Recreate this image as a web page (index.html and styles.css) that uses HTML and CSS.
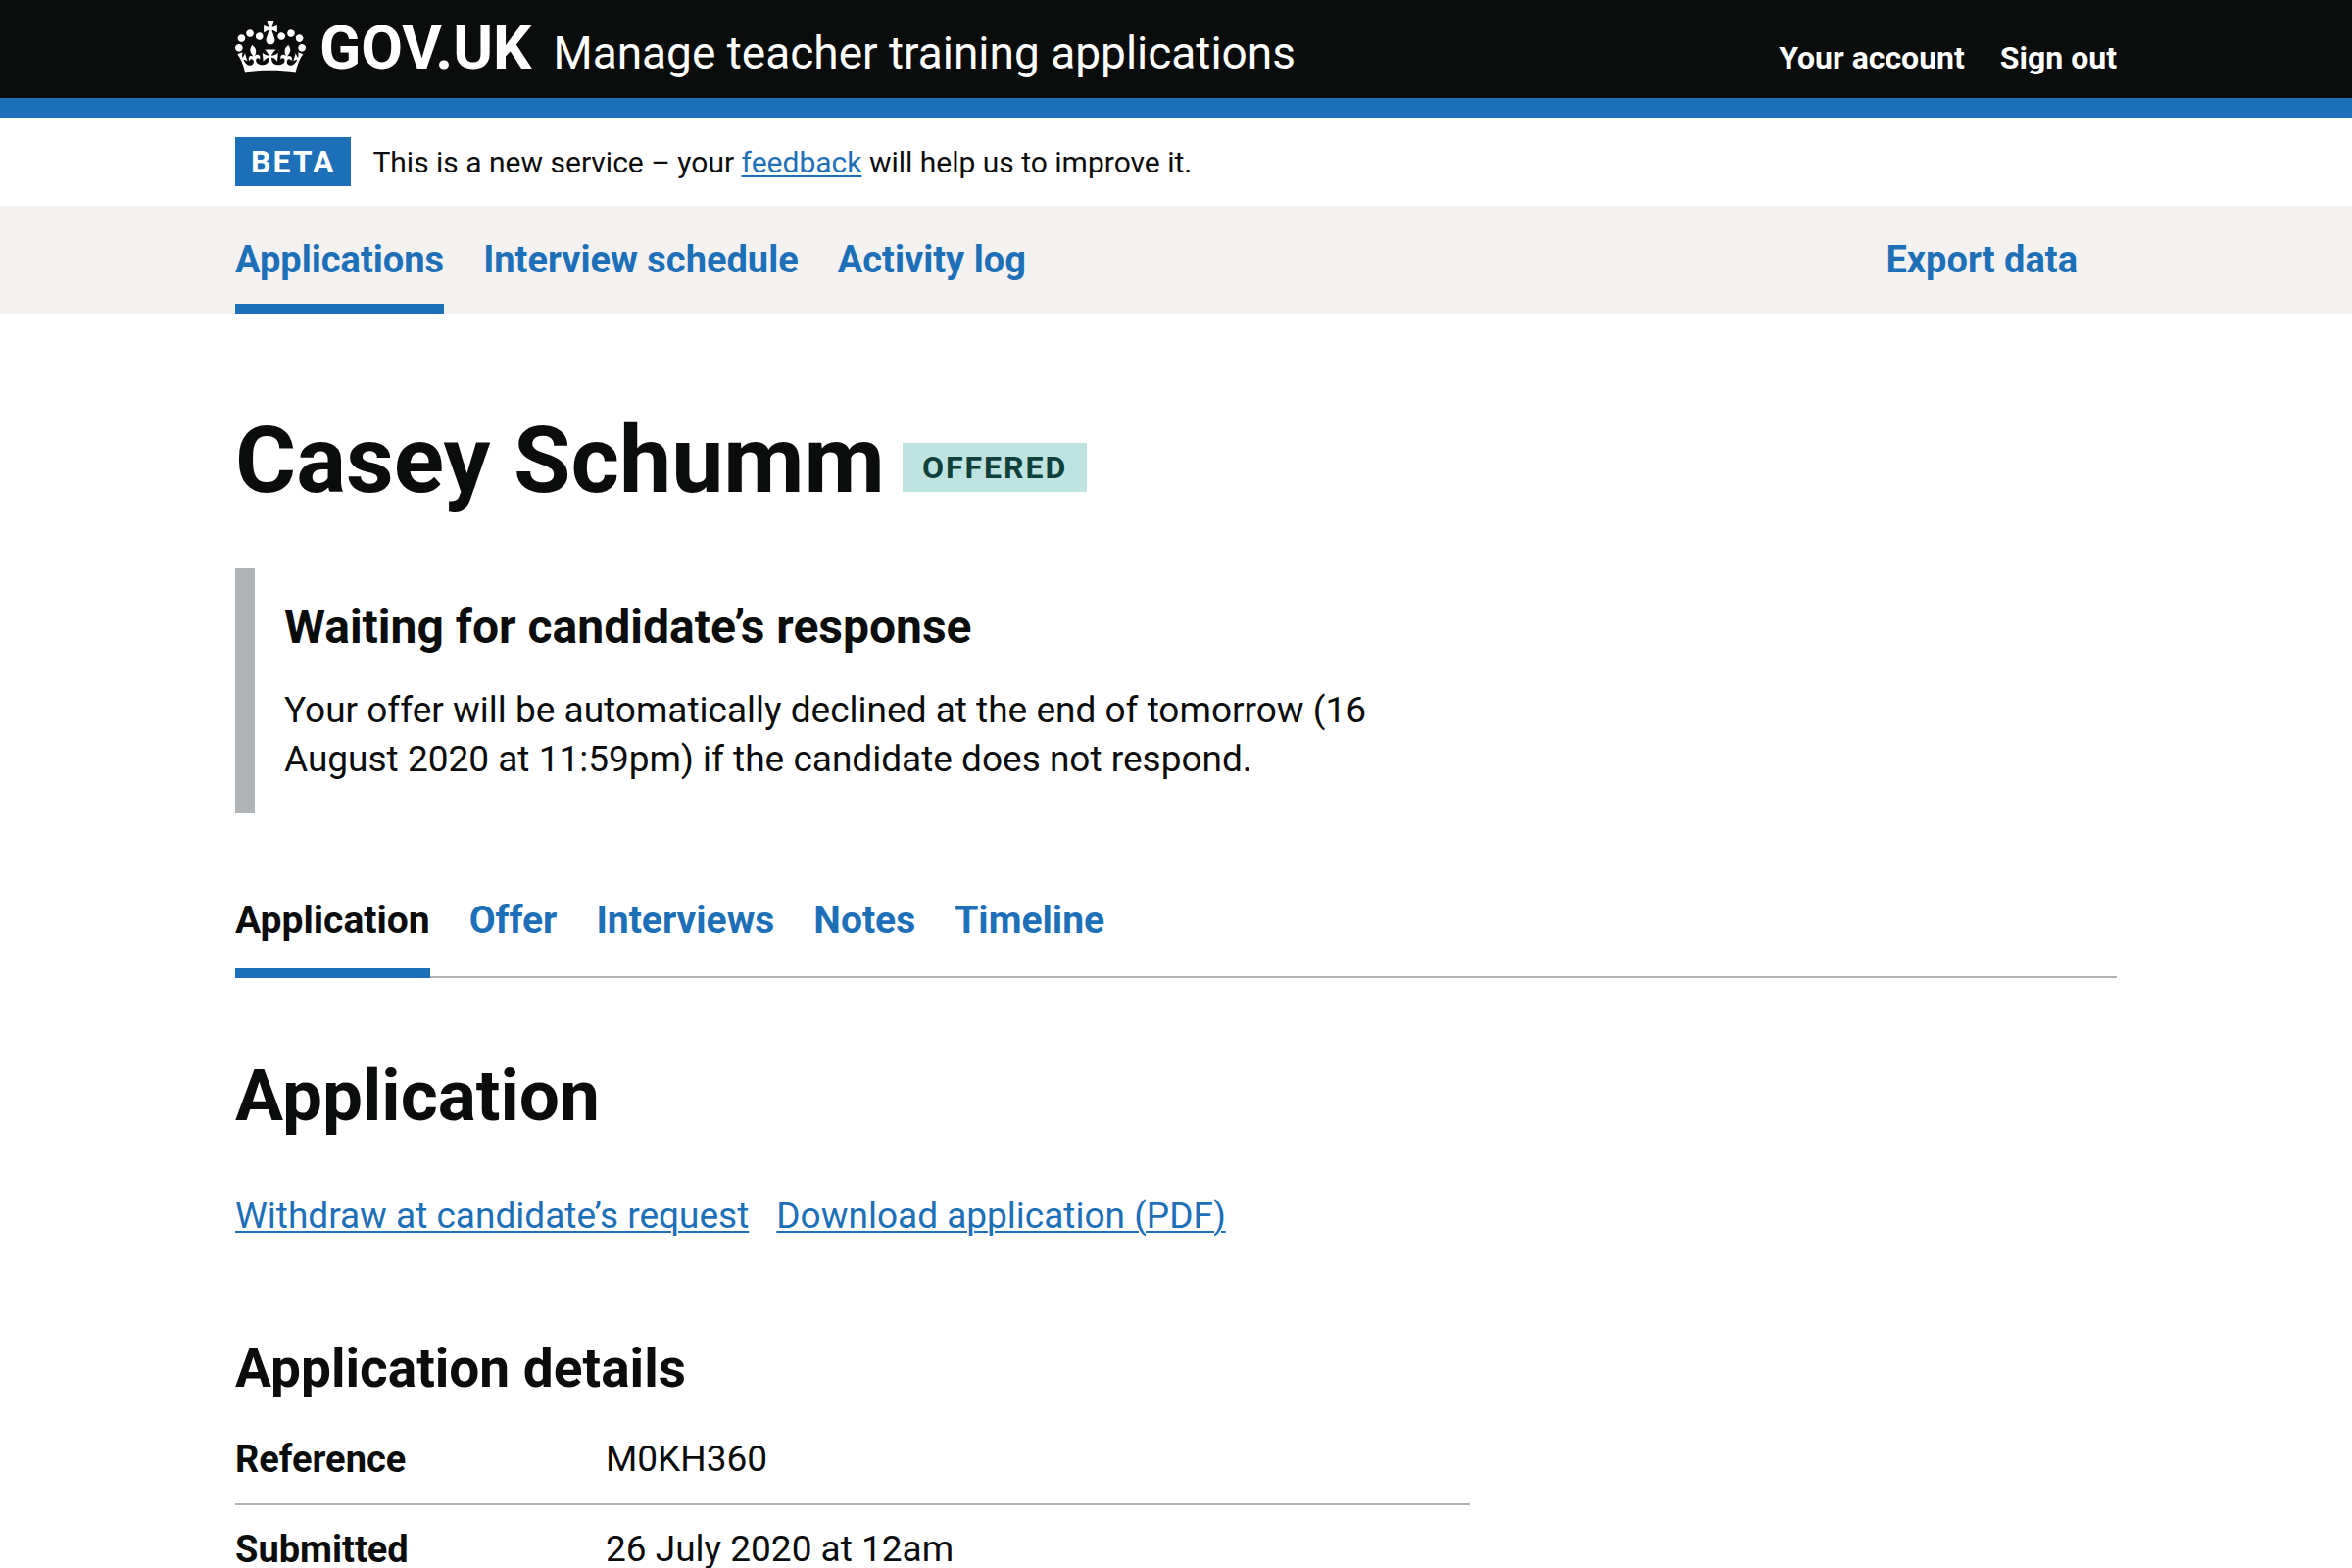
FILE: index.html
```html
<!DOCTYPE html>
<html lang="en">
<head>
  <meta charset="utf-8">
  <meta name="viewport" content="width=device-width, initial-scale=1">
  <title>Casey Schumm - Manage teacher training applications - GOV.UK</title>
  <link rel="stylesheet" href="styles.css">
</head>
<body>
  <header class="header">
    <div class="container header-inner">
      <a class="logo" href="#">
        <svg class="crown" viewBox="0 0 132 97" aria-hidden="true" focusable="false">
          <path fill="currentColor" fill-rule="evenodd" d="M25 30.2c3.5 1.5 7.7-.2 9.1-3.7 1.5-3.6-.2-7.8-3.9-9.2-3.6-1.4-7.6.3-9.1 3.9-1.4 3.5.3 7.5 3.9 9zM9 39.5c3.6 1.5 7.8-.2 9.2-3.7 1.5-3.6-.2-7.8-3.9-9.1-3.6-1.5-7.6.2-9.1 3.8-1.4 3.5.3 7.5 3.8 9zM4.4 57.2c3.5 1.5 7.7-.2 9.1-3.8 1.5-3.6-.2-7.7-3.9-9.1-3.5-1.5-7.6.3-9.1 3.8-1.4 3.5.3 7.6 3.9 9.1zm38.3-21.4c3.5 1.5 7.7-.2 9.1-3.8 1.5-3.6-.2-7.7-3.9-9.1-3.6-1.5-7.6.3-9.1 3.8-1.3 3.6.4 7.7 3.9 9.1zm64.4-5.6c-3.6 1.5-7.8-.2-9.1-3.7-1.5-3.6.2-7.8 3.8-9.2 3.6-1.4 7.7.3 9.2 3.9 1.3 3.5-.4 7.5-3.9 9zm15.9 9.3c-3.6 1.5-7.7-.2-9.1-3.7-1.5-3.6.2-7.8 3.7-9.1 3.6-1.5 7.7.2 9.2 3.8 1.5 3.5-.3 7.5-3.8 9zm4.7 17.7c-3.6 1.5-7.8-.2-9.2-3.8-1.5-3.6.2-7.7 3.9-9.1 3.6-1.5 7.7.3 9.2 3.8 1.3 3.5-.4 7.6-3.9 9.1zM89.3 35.8c-3.6 1.5-7.8-.2-9.2-3.8-1.4-3.6.2-7.7 3.9-9.1 3.6-1.5 7.7.3 9.2 3.8 1.4 3.6-.3 7.7-3.9 9.1zM69.7 17.7l8.9 4.7V9.3l-8.9 2.8c-.2-.3-.5-.6-.9-.9L72.4 0H59.6l3.5 11.2c-.3.3-.6.5-.9.9l-8.8-2.8v13.1l8.8-4.7c.3.3.6.7.9.9l-5 15.4v.1c-.2.8-.4 1.6-.4 2.4 0 4.1 3.1 7.5 7 8.1h.2c.3 0 .7.1 1 .1.4 0 .7 0 1-.1h.2c4-.6 7.1-4.1 7.1-8.1 0-.8-.1-1.7-.4-2.4V34l-5.1-15.4c.4-.2.7-.6 1-.9zM66 92.8c16.9 0 32.8 1.1 47.1 3.2 4-16.9 8.9-26.7 14-33.5l-9.6-3.4c1 4.9 1.1 7.2 0 10.2-1.5-1.4-3-4.3-4.2-8.7L108.6 76c2.8-2 5-3.2 7.5-3.3-4.4 9.4-10 11.9-13.6 11.2-4.3-.8-6.3-4.6-5.6-7.9 1-4.7 5.7-5.9 8-.5 4.3-8.7-3-11.4-7.6-8.8 7.1-7.2 7.9-13.5 2.1-21.1-8 6.1-8.1 12.3-4.5 20.8-4.7-5.4-12.1-2.5-9.5 6.2 3.4-5.2 7.9-2 7.2 3.1-.6 4.3-6.4 7.8-13.5 7.2-10.3-.9-10.9-8-11.2-13.8 2.5-.5 7.1 1.8 11 7.3L80.2 60c-4.1 4.4-8 5.3-12.3 5.4 1.4-4.4 8-11.6 8-11.6H55.5s6.4 7.2 7.9 11.6c-4.2-.1-8-1-12.3-5.4l1.4 16.4c3.9-5.5 8.5-7.7 10.9-7.3-.3 5.8-.9 12.8-11.1 13.8-7.2.6-12.9-2.9-13.5-7.2-.7-5 3.8-8.3 7.1-3.1 2.7-8.7-4.6-11.6-9.4-6.2 3.7-8.5 3.6-14.7-4.6-20.8-5.8 7.6-5 13.9 2.2 21.1-4.7-2.6-11.9.1-7.7 8.8 2.3-5.5 7.1-4.2 8.1.5.7 3.3-1.3 7.1-5.7 7.9-3.5.7-9-1.8-13.5-11.2 2.5.1 4.7 1.3 7.5 3.3l-4.7-15.4c-1.2 4.4-2.7 7.2-4.3 8.7-1.1-3-.9-5.3 0-10.2l-9.5 3.4c5 6.9 9.9 16.7 14 33.5 14.8-2.1 30.8-3.2 47.7-3.2z"/>
        </svg>
        <span class="logo-text">GOV.UK</span>
      </a>
      <a class="service-name" href="#">Manage teacher training applications</a>
      <nav class="account" aria-label="Account">
        <a class="account-link" href="#">Your account</a>
        <a class="account-link" href="#">Sign out</a>
      </nav>
    </div>
  </header>

  <div class="container phase">
    <strong class="tag">BETA</strong>
    <span class="phase-text">This is a new service – your <a class="link" href="#">feedback</a> will help us to improve it.</span>
  </div>

  <nav class="primary" aria-label="Primary">
    <div class="container nav-list">
      <a class="nav-link nav-current" href="#" aria-current="page">Applications</a>
      <a class="nav-link" href="#">Interview schedule</a>
      <a class="nav-link" href="#">Activity log</a>
      <a class="nav-link nav-end" href="#">Export data</a>
    </div>
  </nav>

  <main class="container main">
    <div class="title-row">
      <h1 class="title">Casey Schumm</h1>
      <strong class="tag tag-offered">OFFERED</strong>
    </div>

    <section class="inset">
      <h2 class="inset-title">Waiting for candidate’s response</h2>
      <p>Your offer will be automatically declined at the end of tomorrow (16 August 2020 at 11:59pm) if the candidate does not respond.</p>
    </section>

    <nav class="tabs" aria-label="Application sections">
      <a class="tab tab-current" href="#" aria-current="page">Application</a>
      <a class="tab" href="#">Offer</a>
      <a class="tab" href="#">Interviews</a>
      <a class="tab" href="#">Notes</a>
      <a class="tab" href="#">Timeline</a>
    </nav>

    <h2 class="heading">Application</h2>
    <div class="actions">
      <a class="link" href="#">Withdraw at candidate’s request</a>
      <a class="link" href="#">Download application (PDF)</a>
    </div>

    <section class="details">
      <h3 class="subheading">Application details</h3>
      <dl>
        <div class="summary-row">
          <dt class="summary-key">Reference</dt>
          <dd>M0KH360</dd>
        </div>
        <div class="summary-row">
          <dt class="summary-key">Submitted</dt>
          <dd>26 July 2020 at 12am</dd>
        </div>
      </dl>
    </section>
  </main>
</body>
</html>
```

FILE: styles.css
```css
* {
  box-sizing: border-box;
}

body {
  margin: 0;
  background: #fff;
  color: #0b0c0c;
  font-family: Roboto, "Liberation Sans", sans-serif;
  font-size: 37px;
  line-height: 50px;
}

h1, h2, h3, p, dl, dd {
  margin: 0;
}

a {
  text-decoration: none;
}

.container {
  width: 80%;
  max-width: 1920px;
  margin: 0 auto;
}

.link {
  color: #1d70b8;
  text-decoration: underline;
  text-decoration-thickness: 2px;
  text-underline-offset: 3px;
}

/* Header */

.header {
  background: #0b0c0c;
  border-bottom: 20px solid #1d70b8;
}

.header-inner {
  display: flex;
  align-items: baseline;
  padding-top: 14px;
  padding-bottom: 16px;
}

.logo,
.service-name,
.account-link {
  color: #fff;
}

.logo {
  display: flex;
  align-items: baseline;
  gap: 14px;
  margin-right: 22px;
}

.crown {
  align-self: flex-start;
  width: 72px;
  height: 53px;
  margin-top: 7px;
}

.logo-text {
  font-size: 62px;
  font-weight: 700;
  line-height: 70px;
}

.service-name {
  font-size: 46px;
  line-height: 60px;
}

.account {
  display: flex;
  gap: 36px;
  margin-left: auto;
}

.account-link {
  font-size: 32px;
  font-weight: 700;
  line-height: 40px;
}

/* Phase banner */

.phase {
  display: flex;
  align-items: baseline;
  gap: 22px;
  padding-top: 20px;
  padding-bottom: 20px;
}

.phase-text {
  font-size: 30px;
  line-height: 40px;
}

.tag {
  padding: 5px 16px;
  background: #1d70b8;
  color: #fff;
  font-size: 32px;
  font-weight: 700;
  line-height: 40px;
  letter-spacing: 2px;
}

.tag-offered {
  padding: 5px 20px;
  background: #bfe3e0;
  color: #10403c;
}

/* Primary navigation */

.primary {
  background: #f3f2f1;
}

.nav-list {
  display: flex;
  gap: 40px;
}

.nav-link {
  padding: 30px 0 20px;
  border-bottom: 10px solid transparent;
  color: #1d70b8;
  font-size: 38px;
  font-weight: 700;
}

.nav-current {
  border-bottom-color: #1d70b8;
}

.nav-end {
  margin-left: auto;
  margin-right: 40px;
}

/* Page content */

.main {
  padding-top: 100px;
}

.title-row {
  display: flex;
  align-items: flex-start;
  gap: 18px;
  margin-bottom: 60px;
}

.title-row .tag {
  margin-top: 32px;
}

.title {
  font-size: 95px;
  font-weight: 700;
  line-height: 100px;
}

.inset {
  max-width: 1260px;
  margin-bottom: 60px;
  padding: 30px;
  border-left: 20px solid #b1b4b6;
}

.inset-title {
  margin-bottom: 30px;
  font-size: 48px;
  line-height: 60px;
}

.tabs {
  display: flex;
  gap: 40px;
  margin-bottom: 80px;
  box-shadow: inset 0 -2px #b1b4b6;
}

.tab {
  padding: 24px 0;
  border-bottom: 10px solid transparent;
  color: #1d70b8;
  font-size: 39px;
  font-weight: 700;
}

.tab-current {
  border-bottom-color: #1d70b8;
  color: #0b0c0c;
}

.heading {
  margin-bottom: 58px;
  font-size: 73px;
  line-height: 80px;
}

.actions {
  display: flex;
  gap: 28px;
  margin-bottom: 100px;
}

.details {
  max-width: 1260px;
}

.subheading {
  margin-bottom: 18px;
  font-size: 55px;
  line-height: 60px;
}

.summary-row {
  display: flex;
  padding: 20px 0;
  border-bottom: 2px solid #b1b4b6;
}

.summary-key {
  width: 30%;
  font-size: 38px;
  font-weight: 700;
}
```
